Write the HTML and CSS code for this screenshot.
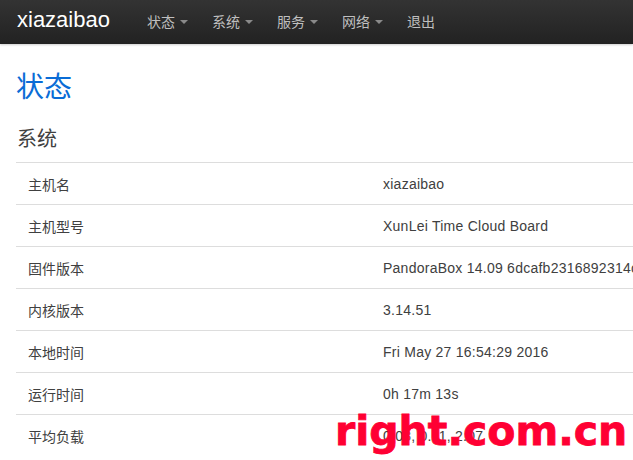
FILE: index.html
```html
<!DOCTYPE html>
<html>
<head>
<meta charset="utf-8">
<link rel="stylesheet" href="styles.css">
</head>
<body>
<header class="navbar">
  <a class="brand">xiazaibao</a>
  <ul class="nav">
    <li class="nav-item">状态<span class="caret"></span></li>
    <li class="nav-item">系统<span class="caret"></span></li>
    <li class="nav-item">服务<span class="caret"></span></li>
    <li class="nav-item">网络<span class="caret"></span></li>
    <li class="nav-item">退出</li>
  </ul>
</header>
<main class="content">
  <h2 class="title">状态</h2>
  <h3 class="section">系统</h3>
  <table class="info">
    <tr><td class="label">主机名</td><td class="value">xiazaibao</td></tr>
    <tr><td class="label">主机型号</td><td class="value">XunLei Time Cloud Board</td></tr>
    <tr><td class="label">固件版本</td><td class="value">PandoraBox 14.09 6dcafb2316892314c</td></tr>
    <tr><td class="label">内核版本</td><td class="value">3.14.51</td></tr>
    <tr><td class="label">本地时间</td><td class="value">Fri May 27 16:54:29 2016</td></tr>
    <tr><td class="label">运行时间</td><td class="value">0h 17m 13s</td></tr>
    <tr><td class="label">平均负载</td><td class="value">0.08, 0.11, 2.07</td></tr>
  </table>
</main>
<div class="watermark">right.com.cn</div>
</body>
</html>
```
FILE: styles.css
```css
html, body {
  margin: 0;
  padding: 0;
  overflow: hidden;
  background: #fff;
}
body {
  width: 633px;
  height: 460px;
  position: relative;
  font-family: "Liberation Sans", Arial, "Noto Sans CJK SC", sans-serif;
  font-size: 14px;
  color: #404040;
}
.navbar {
  height: 44px;
  display: flex;
  align-items: center;
  background: linear-gradient(to bottom, #333333, #222222);
  box-shadow: 0 1px 2px rgba(0,0,0,0.2);
}
.brand {
  color: #ffffff;
  font-size: 22px;
  padding: 0 0 0 17px;
  margin-right: 25px;
  line-height: 44px;
  position: relative;
  top: -2px;
}
.nav {
  display: flex;
  list-style: none;
  margin: 0;
  padding: 0;
}
.nav-item {
  display: flex;
  align-items: center;
  width: 41px;
  padding: 0 12px;
  font-family: "Noto Sans CJK SC", sans-serif;
  font-size: 14px;
  color: #bfbfbf;
  line-height: 40px;
  margin-bottom: 3px;
}
.caret {
  display: inline-block;
  width: 0;
  height: 0;
  margin-left: 5px;
  margin-top: 2px;
  border-left: 4px solid transparent;
  border-right: 4px solid transparent;
  border-top: 4px solid #8a8a8a;
}
.content {
  padding: 0 0 0 16px;
  width: 720px;
}
.title {
  margin: 0;
  padding-top: 21px;
  height: 60px;
  box-sizing: border-box;
  font-family: "Noto Sans CJK SC", sans-serif;
  font-weight: normal;
  font-size: 28px;
  line-height: 40px;
  color: #0a6cd6;
}
.section {
  margin: 0;
  padding-top: 19px;
  height: 58px;
  box-sizing: border-box;
  font-family: "Noto Sans CJK SC", sans-serif;
  font-weight: normal;
  font-size: 20px;
  line-height: 30px;
  color: #404040;
  padding-left: 1px;
}
.info {
  border-collapse: collapse;
  width: 700px;
}
.info td {
  border-top: 1px solid #dddddd;
  height: 41px;
  padding: 0 0 0 12px;
  vertical-align: middle;
  white-space: nowrap;
}
.label {
  width: 343px;
  font-family: "Noto Sans CJK SC", sans-serif;
}
.value {
  font-family: "Liberation Sans", Arial, sans-serif;
  letter-spacing: 0.25px;
}
.watermark {
  position: absolute;
  left: 335px;
  top: 406px;
  font-family: "DejaVu Sans", sans-serif;
  font-weight: bold;
  font-size: 41px;
  color: #ff0033;
  line-height: 50px;
  -webkit-text-stroke: 0.8px #ff0033;
}
```
